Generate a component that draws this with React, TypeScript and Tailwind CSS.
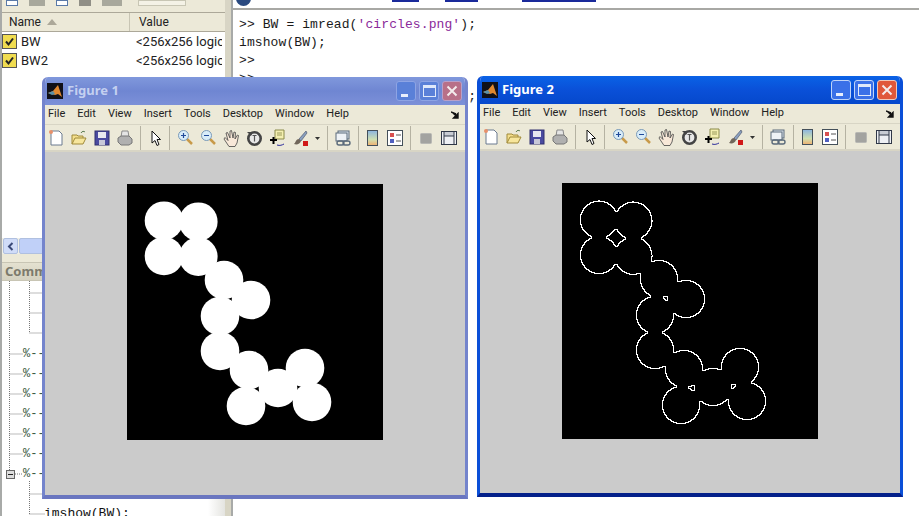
import React from "react";

const circles = [
  [37, 36.7], [71.3, 37.7], [37, 72], [71.3, 72.7], [97, 96], [124, 116], [93, 132],
  [93, 167], [122, 186], [151, 204], [178, 184], [185, 218], [119, 222],
];

function Blobs({ outline }: { outline?: boolean }) {
  return (
    <svg width="256" height="256" viewBox="0 0 256 256" className="block bg-black">
      <defs>
        {/* perimeter = union of the discs minus its erosion */}
        <filter id="perim" x="0" y="0" width="100%" height="100%">
          <feMorphology in="SourceAlpha" operator="erode" radius="1" result="inner" />
          <feComposite in="SourceGraphic" in2="inner" operator="out" />
        </filter>
      </defs>
      <g filter={outline ? "url(#perim)" : undefined} shapeRendering={outline ? "crispEdges" : undefined}>
        {circles.map(([x, y], i) => (
          <circle key={i} cx={x} cy={y} r={19.3} fill="#fff" />
        ))}
      </g>
    </svg>
  );
}

function Ico({ children, w = 16 }: { children: React.ReactNode; w?: number }) {
  return (
    <svg width={w} height="18" viewBox={`0 0 ${w} 18`} className="shrink-0">
      {children}
    </svg>
  );
}

const Sep = () => <div className="h-[24px] w-px shrink-0 bg-[#b5b2a2]" />;

function Toolbar() {
  return (
    <div className="flex h-[27px] items-center gap-[7px] border-b-2 border-[#d8d5c5] bg-[#ece9d8] pl-[3px]">
      {/* new */}
      <Ico>
        <path d="M3 2h8l3 3v11H3z" fill="#fff" stroke="#6b7a90" />
        <circle cx="3" cy="3" r="2" fill="#e8906a" />
      </Ico>
      {/* open */}
      <Ico>
        <path d="M1 15V6h5l1 1h5v2" fill="#f4df8c" stroke="#a08a3a" />
        <path d="M1 15l3-6h11l-3 6z" fill="#f7e69c" stroke="#a08a3a" />
        <path d="M10 4c1-2 3-2 4-1" fill="none" stroke="#5a7a50" />
      </Ico>
      {/* save */}
      <Ico>
        <rect x="1" y="2" width="14" height="14" fill="#4a4aa0" stroke="#30306e" />
        <rect x="4" y="3" width="8" height="6" fill="#e8e8f0" />
        <rect x="5" y="11" width="6" height="5" fill="#c8c8d8" />
      </Ico>
      {/* print */}
      <Ico>
        <path d="M5 2h6l1 6H4z" fill="#e4e4e4" stroke="#8a8a8a" />
        <path d="M1 9l3-2h8l3 3v4l-3 2H4l-3-3z" fill="#b0b0b0" stroke="#777" />
      </Ico>
      <Sep />
      {/* arrow */}
      <Ico w={14}>
        <path d="M4 2v12l3-2.5 2 5 2-1-2-5h3.5z" fill="#fff" stroke="#111" strokeWidth="1" />
      </Ico>
      <Sep />
      {/* zoom in */}
      <Ico>
        <path d="M10 10l5 5" stroke="#c89a4a" strokeWidth="2.5" />
        <circle cx="6.5" cy="6.5" r="5" fill="#d8ecf8" stroke="#7a9ab8" />
        <path d="M4 6.5h5M6.5 4v5" stroke="#204a9a" strokeWidth="1.2" />
      </Ico>
      {/* zoom out */}
      <Ico>
        <path d="M10 10l5 5" stroke="#c89a4a" strokeWidth="2.5" />
        <circle cx="6.5" cy="6.5" r="5" fill="#d8ecf8" stroke="#7a9ab8" />
        <path d="M4 6.5h5" stroke="#204a9a" strokeWidth="1.2" />
      </Ico>
      {/* hand */}
      <Ico>
        <path
          d="M6 17.5L1 10l1-1.5 3 3L3 4l1.5-.5L7 9 7 2l1.5-.5L10 9l1-6 1.5.5L12 10l2.5-4 1 .5L14 14l-2 3.5z"
          fill="#f8e8d8"
          stroke="#444"
          strokeWidth="0.8"
        />
      </Ico>
      {/* rotate */}
      <Ico>
        <circle cx="8.5" cy="9.5" r="6.2" fill="#e8e8e8" stroke="#444" strokeWidth="2.6" />
        <path d="M6.5 6.5h4M8.5 6.5v6" stroke="#555" strokeWidth="1.2" />
        <path d="M1 3h6L5 7z" fill="#444" />
      </Ico>
      {/* data cursor */}
      <Ico>
        <path d="M6 1h9v9H6z" fill="#f4efb0" stroke="#8a8a4a" />
        <path d="M8 4h5M8 6h5" stroke="#9a9a5a" />
        <path d="M1 11h7M4.5 8v7" stroke="#000" strokeWidth="2" />
        <path d="M8 16c3 1 5 0 7-1" fill="none" stroke="#2a2a9a" />
      </Ico>
      {/* brush */}
      <Ico>
        <path d="M14 2L7 10l2 2 6-8z" fill="#8aa0c0" stroke="#505a70" strokeWidth="0.7" />
        <path d="M7 10c-3 0-3 3-5 5 3 1 6 0 7-3z" fill="#70665a" />
        <rect x="11" y="12" width="5" height="5" fill="#d01818" />
      </Ico>
      {/* dropdown */}
      <Ico w={5}>
        <path d="M0 8h5L2.5 11z" fill="#333" />
      </Ico>
      <Sep />
      {/* link */}
      <Ico>
        <rect x="3" y="2" width="11" height="8" fill="#dfe6ee" stroke="#5a6a7a" />
        <rect x="1" y="4" width="11" height="8" fill="#eef2f6" stroke="#5a6a7a" />
        <rect x="2" y="12" width="7" height="4" rx="2" fill="none" stroke="#5a6a7a" strokeWidth="1.4" />
        <rect x="8" y="12" width="7" height="4" rx="2" fill="none" stroke="#5a6a7a" strokeWidth="1.4" />
      </Ico>
      <Sep />
      {/* colorbar */}
      <Ico w={14}>
        <defs>
          <linearGradient id="cb" x1="0" y1="0" x2="0" y2="1">
            <stop offset="0" stopColor="#8ab4e0" />
            <stop offset="0.6" stopColor="#cfe0b0" />
            <stop offset="1" stopColor="#f0b070" />
          </linearGradient>
        </defs>
        <rect x="1.5" y="1.5" width="10" height="15" fill="url(#cb)" stroke="#44505a" />
      </Ico>
      {/* legend */}
      <Ico>
        <rect x="0.5" y="1.5" width="15" height="15" fill="#fff" stroke="#44505a" />
        <rect x="3" y="4" width="4" height="4" fill="#d85050" />
        <rect x="3" y="10" width="4" height="4" fill="#5060c0" />
        <path d="M9 6h5M9 12h5" stroke="#555" />
      </Ico>
      <Sep />
      {/* hide plot tools */}
      <Ico>
        <rect x="2.5" y="4.5" width="11" height="10" rx="1" fill="#a3a3a0" stroke="#b8b8b4" />
      </Ico>
      {/* show plot tools */}
      <Ico>
        <rect x="0.5" y="2.5" width="15" height="13" fill="#eef0f4" stroke="#303848" />
        <path d="M3 3v4h10V3" fill="#c8ccd4" stroke="#303848" />
        <path d="M3 7v8M13 7v8" stroke="#303848" />
      </Ico>
    </div>
  );
}

const menuItems = ["File", "Edit", "View", "Insert", "Tools", "Desktop", "Window", "Help"];

function FigureWindow({
  n,
  active,
  pos,
}: {
  n: number;
  active?: boolean;
  pos: string;
}) {
  return (
    <div
      className={`absolute flex w-[426px] flex-col overflow-hidden rounded-t-[6px] border-x-[3px] border-b-[4px] ${pos} ${
        active ? "border-x-[#0a4fd8] border-b-[#04208a]" : "border-x-[#7484cc] border-b-[#6a76c0]"
      }`}
    >
      <div
        className={`-mx-[3px] flex h-[28px] shrink-0 items-center pl-[5px] pr-[6px] ${
          active
            ? "bg-gradient-to-b from-[#0a62e6] via-[#0a50d8] to-[#0648cc]"
            : "bg-gradient-to-b from-[#8098dc] via-[#6f86d2] to-[#7c90d8]"
        }`}
      >
        <svg width="16" height="16" viewBox="0 0 16 16" className="shrink-0">
          <rect width="16" height="16" fill="#101018" />
          <path d="M1 10l5-2 5-6 4 12-4-3-3 1z" fill="#e08830" />
          <path d="M1 10l5-2 2 3-3 1z" fill="#5a90a8" />
        </svg>
        <span
          className={`ml-[4px] font-['Noto_Sans',sans-serif] text-[13px] font-bold ${
            active ? "text-white" : "text-[#c4d0f0]"
          }`}
        >
          Figure {n}
        </span>
        <div className="ml-auto flex items-center gap-[3px]">
          <div
            className={`flex h-[20px] w-[20px] items-end rounded-[3px] border pb-[3px] pl-[4px] ${
              active ? "border-[#c0d4f8] bg-[#3a70e8]" : "border-[#8ea4e4] bg-[#5a80d8]"
            }`}
          >
            <div className="h-[3px] w-[7px] bg-[#e8eefc]" />
          </div>
          <div
            className={`flex h-[20px] w-[20px] items-center justify-center rounded-[3px] border ${
              active ? "border-[#c0d4f8] bg-[#3a70e8]" : "border-[#8ea4e4] bg-[#5a80d8]"
            }`}
          >
            <div className="h-[12px] w-[13px] border border-t-[3px] border-[#dfe8fa]" />
          </div>
          <div
            className={`flex h-[20px] w-[20px] items-center justify-center rounded-[3px] border ${
              active ? "border-[#f0c8b8] bg-[#e0583a]" : "border-[#b8a0c8] bg-[#b87088]"
            }`}
          >
            <svg width="12" height="12" viewBox="0 0 12 12">
              <path d="M1.5 1.5l9 9M10.5 1.5l-9 9" stroke="#f4ecec" strokeWidth="2" />
            </svg>
          </div>
        </div>
      </div>
      <div className="relative flex h-[20px] shrink-0 items-center gap-[12px] border-b border-[#d8d5c5] bg-[#ece9d8] pl-[3px] font-['Roboto',sans-serif] text-[11px] text-[#222]">
        {menuItems.map((m) => (
          <span key={m}>{m}</span>
        ))}
        <svg width="8" height="8" viewBox="0 0 8 8" className="ml-auto mr-[6px]">
          <path d="M0 1l5 2M7 7L2 2M7 7V2.5L2.5 7z" stroke="#111" strokeWidth="1.4" fill="#111" />
        </svg>
      </div>
      <Toolbar />
      <div className="flex flex-1 justify-center bg-[#cbcbcb] pt-[32px]">
        <div>
          <Blobs outline={active} />
        </div>
      </div>
    </div>
  );
}

const Check = () => (
  <div className="flex h-[15px] w-[15px] items-center justify-center border border-[#555] bg-[#f0dc50]">
    <svg width="11" height="11" viewBox="0 0 11 11">
      <path d="M2 5.5l2.5 3L9 2.5" fill="none" stroke="#222" strokeWidth="2" />
    </svg>
  </div>
);

function VarRow({ name }: { name: string }) {
  return (
    <div className="flex h-[19px] items-center whitespace-nowrap">
      <Check />
      <span className="ml-[4px] w-[115px]">{name}</span>
      <span className="w-[86px] overflow-hidden">&lt;256x256 logical&gt;</span>
    </div>
  );
}

function TreeRow({ pct }: { pct?: boolean }) {
  return (
    <div className="flex h-[20px] items-center pl-[21px] font-['Liberation_Mono',monospace] text-[12px] leading-none text-[#3a5a42]">
      {pct ? "%--" : ""}
    </div>
  );
}

function LeftPanel() {
  return (
    <div className="flex w-[225px] shrink-0 flex-col border-l-2 border-[#a8aaa8] bg-white">
      {/* workspace toolbar */}
      <div className="flex h-[12px] shrink-0 items-end gap-[11px] overflow-hidden bg-[#ece9d8] pb-[6px] pl-[4px]">
        <div className="h-[6px] w-[12px] border border-[#5a7aa8] bg-white" />
        <div className="h-[6px] w-[16px] bg-[#a8a89c]" />
        <div className="h-[6px] w-[12px] border border-[#5a7aa8] bg-white" />
        <div className="h-[6px] w-[12px] bg-[#908f86]" />
        <div className="h-[6px] w-[20px] bg-[#a8a89c]" />
        <div className="ml-[5px] h-[6px] w-[48px] border border-[#c8c6b4] bg-[#f4f2e6]" />
      </div>
      {/* variable table */}
      <div className="flex h-[20px] shrink-0 items-center border-y border-[#aca899] bg-[#ece9d8] font-['Roboto',sans-serif] text-[12px] text-[#222]">
        <div className="flex w-[128px] items-center border-r border-[#c8c5b4] pl-[7px]">
          Name
          <svg width="10" height="6" viewBox="0 0 10 6" className="ml-[6px]">
            <path d="M0 6l5-6 5 6z" fill="#aca899" />
          </svg>
        </div>
        <div className="pl-[9px]">Value</div>
      </div>
      <div className="h-[206px] shrink-0 font-['Roboto',sans-serif] text-[13px] text-[#222]">
        <VarRow name="BW" />
        <VarRow name="BW2" />
      </div>
      {/* horizontal scrollbar */}
      <div className="flex h-[16px] shrink-0 gap-px bg-[#f0efe6] pl-[1px]">
        <div className="flex w-[15px] items-center justify-center rounded-[2px] border border-[#b0c0e0] bg-[#d0dcf8]">
          <svg width="7" height="9" viewBox="0 0 7 9">
            <path d="M5.5 1L2 4.5 5.5 8" fill="none" stroke="#3a4a78" strokeWidth="2" />
          </svg>
        </div>
        <div className="flex-1 rounded-[2px] border border-[#b0c0e0] bg-[#c0d0f8]" />
      </div>
      <div className="h-[8px] shrink-0 bg-[#ece9d8]" />
      {/* command history */}
      <div className="flex h-[19px] shrink-0 items-center border-y border-[#c8c5b4] bg-gradient-to-b from-[#e4e1d0] to-[#d4d1c0] pl-[3px] font-['Noto_Sans',sans-serif] text-[13px] font-bold text-[#7c7a6c]">
        Command History
      </div>
      <div className="flex min-h-0 flex-1">
        <div className="relative flex-1 overflow-hidden pt-[3px]">
          <svg width="45" height="235" viewBox="0 0 45 235" className="absolute left-0 top-0">
            <g stroke="#777" strokeDasharray="1 1" fill="none">
              <path d="M7.5 0V190" />
              <path d="M27.5 0V52M27.5 12H43M27.5 32H43M27.5 52H43" />
              <path d="M7.5 73H21M7.5 93H21M7.5 113H21M7.5 133H21M7.5 153H21M7.5 173H21" />
              <path d="M13 193H21M27.5 200V233M27.5 213H43M27.5 233H43" />
            </g>
            <rect x="4.5" y="189.5" width="8" height="8" fill="#ddd" stroke="#666" />
            <path d="M6 193.5h5" stroke="#222" />
          </svg>
          <div className="relative">
            <TreeRow />
            <TreeRow />
            <TreeRow />
            <TreeRow pct />
            <TreeRow pct />
            <TreeRow pct />
            <TreeRow pct />
            <TreeRow pct />
            <TreeRow pct />
            <TreeRow pct />
            <TreeRow />
            <div className="flex h-[20px] items-center pl-[42px] font-['Liberation_Mono',monospace] text-[13px] text-[#111]">
              imshow(BW);
            </div>
          </div>
        </div>
        {/* vertical scrollbar, only its foot shows below Figure 1 */}
        <div className="w-[17px] shrink-0 bg-gradient-to-r from-white to-[#e4e4e0]" />
      </div>
    </div>
  );
}

function CommandWindow() {
  return (
    <div className="flex min-w-0 flex-1 flex-col border-l-2 border-[#a8aaa8] bg-white">
      <div className="relative h-[8px] shrink-0 overflow-hidden">
        <div className="absolute -top-[9px] left-[3px] h-[15px] w-[15px] rounded-full bg-[#2a4a80]" />
        <div className="absolute left-[159px] top-0 h-[2px] w-[27px] bg-[#1a2a9a]" />
        <div className="absolute left-[212px] top-0 h-[2px] w-[33px] bg-[#1a2a9a]" />
        <div className="absolute left-[289px] top-0 h-[2px] w-[74px] bg-[#1a2a9a]" />
      </div>
      <div className="h-[2px] shrink-0 bg-[#a8a8a4]" />
      <div className="whitespace-pre pl-[6px] pt-[6px] font-['Liberation_Mono',monospace] text-[13px] leading-[18px] tracking-[0.1px] text-[#1a1a1a]">
        <div>
          {">> BW = imread("}
          <span className="text-[#8a2a9a]">'circles.png'</span>
          {");"}
        </div>
        <div>imshow(BW);</div>
        <div>{">>"}</div>
        <div>{">>"}</div>
        <div>{">> BW2 = bwmorph(BW,'remove');"}</div>
      </div>
    </div>
  );
}

export default function App() {
  return (
    <div className="relative flex h-[516px] w-[919px] overflow-hidden bg-white">
      <LeftPanel />
      <div className="w-[6px] shrink-0 bg-[#d8d5c5]" />
      <CommandWindow />
      <FigureWindow n={1} pos="left-[42px] top-[77px] h-[422px]" />
      <FigureWindow n={2} active pos="left-[477px] top-[76px] h-[421px]" />
    </div>
  );
}
